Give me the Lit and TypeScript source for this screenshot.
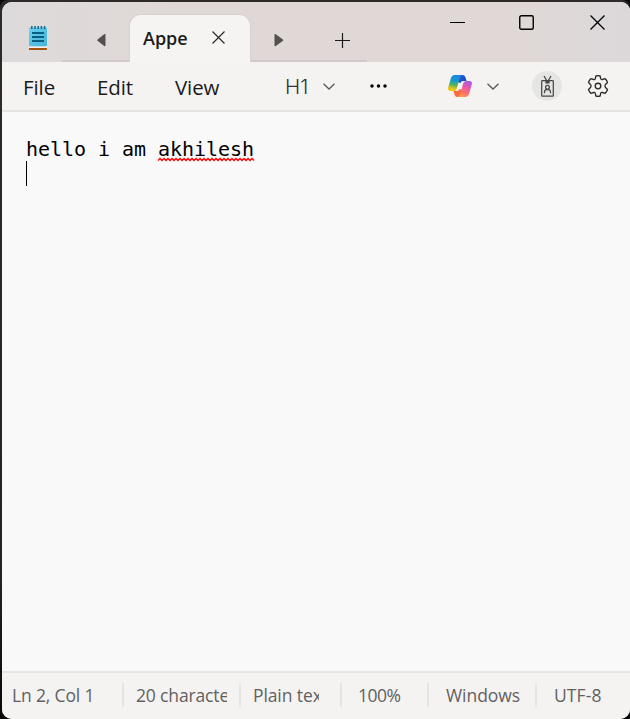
import { LitElement, html, css, svg } from "lit";
import { customElement, property } from "lit/decorators.js";

const icons = {
  notepad: svg`
    <defs>
      <linearGradient id="page" x1="0" y1="0" x2="1" y2="1">
        <stop offset="0" stop-color="#6bd0ef"/><stop offset="1" stop-color="#45b3d8"/>
      </linearGradient>
    </defs>
    <path d="M0 22h18v1a1 1 0 0 1-1 1H0z" fill="#a9520d"/>
    <path d="M0 20.2h18v1.8H0z" fill="#f3eeec"/>
    <path d="M1 1.500h16a1 1 0 0 1 1 1V19a1.200 1.200 0 0 1-1.200 1.200H0V2.500a1 1 0 0 1 1-1z" fill="url(#page)"/>
    <path d="M2.800 0v3M6 0v3M9.200 0v3M12.400 0v3M15.600 0v3" stroke="#12678c" stroke-width="1.500"/>
    <path d="M3 7h12M3 11h12M3 15h12" stroke="#075f83" stroke-width="1.800"/>`,
  left: svg`<path d="M9.500 .8v10.600a.8.8 0 0 1-1.300.6L1.800 7.100a1.200 1.200 0 0 1 0-1.900L8.200.2a.8.8 0 0 1 1.300.6z" fill="#55504f"/>`,
  right: svg`<path d="M.5.800v10.600a.8.8 0 0 0 1.300.6l6.900-4.900a1.200 1.200 0 0 0 0-1.900L1.800.2A.8.8 0 0 0 .5.800z" fill="#55504f"/>`,
  plus: svg`<path d="M0 7.500h15M7.500 0v15" stroke="#1c1a1a" stroke-width="1.200"/>`,
  tabClose: svg`<path d="M.5.500l12 12M12.500.500l-12 12" stroke="#2a2929" stroke-width="1.150"/>`,
  minimize: svg`<path d="M0 7.500h15" stroke="#000" stroke-width="1"/>`,
  maximize: svg`<rect x=".75" y=".75" width="13.500" height="13.500" rx="1.500" fill="none" stroke="#000" stroke-width="1.400"/>`,
  close: svg`<path d="M.5.500l14 14M14.500.500l-14 14" stroke="#000" stroke-width="1.300"/>`,
  chevron: svg`<path d="M.5.700l5.500 5.300L11.500.700" fill="none" stroke="#5a5958" stroke-width="1.300"/>`,
  dots: svg`<circle cx="2" cy="2" r="1.750"/><circle cx="8.500" cy="2" r="1.750"/><circle cx="15" cy="2" r="1.750"/>`,
  copilot: svg`
    <defs>
      <linearGradient id="cl" x1=".5" y1="0" x2=".35" y2="1">
        <stop offset="0" stop-color="#1788e6"/><stop offset=".35" stop-color="#1798c9"/>
        <stop offset=".62" stop-color="#52b45c"/><stop offset=".85" stop-color="#e3c51a"/><stop offset="1" stop-color="#f4c50a"/>
      </linearGradient>
      <linearGradient id="cr" x1=".7" y1="0" x2=".35" y2="1">
        <stop offset="0" stop-color="#a85be8"/><stop offset=".4" stop-color="#e85ba8"/>
        <stop offset=".75" stop-color="#fb7468"/><stop offset="1" stop-color="#ff9a4e"/>
      </linearGradient>
      <linearGradient id="ct" x1="0" y1="0" x2="1" y2="1">
        <stop offset="0" stop-color="#2369df"/><stop offset="1" stop-color="#1b3cb3"/>
      </linearGradient>
    </defs>
    <path d="M12 0h2.700c1.600 0 2.300.9 2.800 2.400l1 3.600h-3.300c-1.600 0-2.400.8-2.900 2.300L10 7z" fill="url(#ct)"/>
    <path d="M12 22H9.300c-1.600 0-2.300-.9-2.800-2.400L5.400 16h3.400c1.600 0 2.400-.8 2.900-2.300L14 15z" fill="#fb6a3c"/>
    <path d="M6.700 0h7.700c-1.500.2-2.100 1.300-2.600 2.900L8.800 13.400C8.300 15 7.200 16 5.400 16H2.600C.4 16-.4 14.500.2 12.400L2.800 3.500C3.500 1.200 4.700 0 6.700 0z" fill="url(#cl)"/>
    <path d="M17.300 22H9.600c1.500-.2 2.100-1.300 2.600-2.900l3-10.500C15.700 7 16.800 6 18.600 6h2.800c2.200 0 3 1.500 2.400 3.600l-2.600 8.900c-.7 2.300-1.900 3.500-3.900 3.500z" fill="url(#cr)"/>`,
  badge: svg`<g fill="none" stroke="#484746" stroke-width="1.250">
      <rect x=".7" y="4.700" width="11.600" height="15.500" rx=".6"/>
      <path d="M3 0l3.500 6L10 0M5 4.500v2.300h3V4.500"/>
      <circle cx="6.500" cy="11.200" r="1.900"/>
      <path d="M3.500 17.200v-1.100c0-1.500 1-2.400 2.200-2.400h1.600c1.200 0 2.200.9 2.200 2.400v1.100"/>
    </g>`,
  gear: svg`<g fill="none" stroke="#2b2a2a" stroke-width="1.350" stroke-linejoin="round">
      <path d="M8.900 1Q11 .3 13.100 1L13.700 3.600Q14.100 4.900 15.400 4.500L18.200 3.700Q19.800 5.300 20.500 7.400L18.500 9.400Q17.300 11 18.500 12.600L20.500 14.600Q19.800 16.700 18.200 18.300L15.400 17.500Q14.100 17.100 13.700 18.400L13.100 21Q11 21.700 8.900 21L8.300 18.400Q7.900 17.100 6.600 17.500L3.800 18.300Q2.200 16.700 1.500 14.600L3.500 12.600Q4.700 11 3.500 9.400L1.500 7.400Q2.200 5.300 3.800 3.700L6.600 4.500Q7.900 4.900 8.300 3.600z"/>
      <circle cx="11" cy="11" r="2.800"/>
    </g>`,
  squiggle: svg`<path d=${"M0 2.500" + "l2-2l2 2".repeat(24)} fill="none" stroke="#f00" stroke-width="1.300"/>`,
};

@customElement("np-icon")
class NpIcon extends LitElement {
  @property() name: keyof typeof icons = "plus";
  @property({ type: Number }) w = 16;
  @property({ type: Number }) h = 16;
  static styles = css`
    :host { display: block; flex: none; line-height: 0; }
    svg { display: block; overflow: visible; }
  `;
  render() {
    return html`<svg width=${this.w} height=${this.h} viewBox="0 0 ${this.w} ${this.h}">${icons[this.name]}</svg>`;
  }
}

@customElement("app-root")
class AppRoot extends LitElement {
  static styles = css`
    :host { display: block; height: 719px; background: #0a0909; font-family: "Open Sans", "Noto Sans", sans-serif; color: #1b1a1a; }
    * { box-sizing: border-box; }
    .frame { height: 719px; padding: 2px 0 0 2px; overflow: hidden; background: linear-gradient(#2f2a2a, #242424 80%, #080808); border-radius: 8px 8px 0 0; }
    .window { height: 717px; display: flex; flex-direction: column; border-radius: 10px 9px 10px 10px; overflow: hidden; background: #f9f9f9; white-space: nowrap; }
    .titlebar { height: 60px; flex: none; display: flex; background: linear-gradient(90deg, #dddadb, #e0d8d6 28%, #e0d8d6 80%, #dcd8da); }
    .app { width: 60px; padding: 24px 0 0 27px; }
    .strip { display: flex; border-bottom: 2px solid #d2caca; }
    .before { width: 67px; padding: 32px 0 0 33.5px; }
    .after { width: 116px; padding: 32px 0 0 23px; }
    .plus { margin: -1px 0 0 51px; }
    .tab { width: 122px; margin-top: 12px; display: flex; background: #f5f4f2; border: 1px solid #d8d0ce; border-bottom: 0; border-radius: 12px 12px 0 0; padding-left: 13px; }
    .tabname { width: 68.5px; font-size: 18px; font-weight: 600; line-height: 24px; padding-top: 11px; }
    .tabclose { margin-top: 16px; }
    .controls { margin-left: auto; display: flex; padding-top: 13px; }
    .controls .max { margin-left: 54px; }
    .controls .x { margin: 0 25px 0 56px; }
    .menubar { height: 50px; flex: none; display: flex; align-items: center; background: #f5f3f2; border-bottom: 2px solid #e6e4e3; font-size: 20.5px; }
    .menu { line-height: 28px; padding-top: 2px; letter-spacing: -0.1px; }
    .file { width: 74px; margin-left: 21px; }
    .edit { width: 78px; }
    .view { width: 110px; }
    .heading { width: 38px; font-family: Inter, "Open Sans", sans-serif; font-weight: 300; color: #343332; }
    .dots { margin-left: 35px; }
    .copilot { margin-left: 61px; }
    .chev2 { margin-left: 15px; }
    .avatar { width: 30px; height: 30px; border-radius: 50%; background: #e5e5e4; display: grid; place-items: center; margin-left: 33px; }
    .gear { margin-left: 25px; }
    .editor { flex: 1; padding: 25px 0 0 24px; font: 20px/25px "DejaVu Sans Mono", monospace; color: #000; letter-spacing: -0.04px; }
    .line { height: 24px; }
    .misspelt { position: relative; }
    .squiggle { position: absolute; left: 0; bottom: 0; }
    .caret { width: 1px; height: 25px; background: #000; }
    .status { height: 48px; flex: none; display: flex; border-top: 2px solid #e5e5e4; background: #f4f3f2; padding-top: 10px; font-size: 17.5px; line-height: 24px; color: #62615f; }
    .cell { height: 24px; border-left: 2px solid #e5e4e3; }
    .cell:first-child { border: 0; }
    .clip { overflow: hidden; }
  `;
  render() {
    const cells = [
      { text: "Ln 2, Col 1", width: 120, inset: 10, clip: 100, track: -0.15 },
      { text: "20 characters", width: 117, inset: 12, clip: 91, track: -0.15 },
      { text: "Plain text", width: 101, inset: 12, clip: 66, track: -0.1 },
      { text: "100%", width: 87, inset: 16, clip: 60, track: -0.5 },
      { text: "Windows", width: 108, inset: 17, clip: 86, track: -0.05 },
      { text: "UTF-8", width: 95, inset: 17, clip: 70, track: 0.1 },
    ];
    return html`<div class="frame"><div class="window">
      <header class="titlebar">
        <div class="app"><np-icon name="notepad" w="18" h="25"></np-icon></div>
        <div class="strip before"><np-icon name="left" w="10" h="12"></np-icon></div>
        <div class="tab"><span class="tabname">Appe</span><np-icon class="tabclose" name="tabClose" w="13" h="13"></np-icon></div>
        <div class="strip after"><np-icon name="right" w="10" h="12"></np-icon><np-icon class="plus" name="plus" w="15" h="15"></np-icon></div>
        <div class="controls">
          <np-icon name="minimize" w="15" h="15"></np-icon>
          <np-icon class="max" name="maximize" w="15" h="15"></np-icon>
          <np-icon class="x" name="close" w="15" h="15"></np-icon>
        </div>
      </header>
      <nav class="menubar">
        <span class="menu file">File</span><span class="menu edit">Edit</span><span class="menu view">View</span>
        <span class="heading">H1</span><np-icon name="chevron" w="12" h="7"></np-icon>
        <np-icon class="dots" name="dots" w="17" h="4"></np-icon>
        <np-icon class="copilot" name="copilot" w="24" h="22"></np-icon>
        <np-icon class="chev2" name="chevron" w="12" h="7"></np-icon>
        <span class="avatar"><np-icon name="badge" w="13" h="21"></np-icon></span>
        <np-icon class="gear" name="gear" w="22" h="22"></np-icon>
      </nav>
      <main class="editor">
        <div class="line">hello i am <span class="misspelt">akhilesh<np-icon class="squiggle" name="squiggle" w="96" h="3"></np-icon></span></div>
        <div class="caret"></div>
      </main>
      <footer class="status">
        ${cells.map((c) => html`<div class="cell" style="width:${c.width}px;padding-left:${c.inset}px"><div class="clip" style="width:${c.clip}px;letter-spacing:${c.track}px">${c.text}</div></div>`)}
      </footer>
    </div></div>`;
  }
}
